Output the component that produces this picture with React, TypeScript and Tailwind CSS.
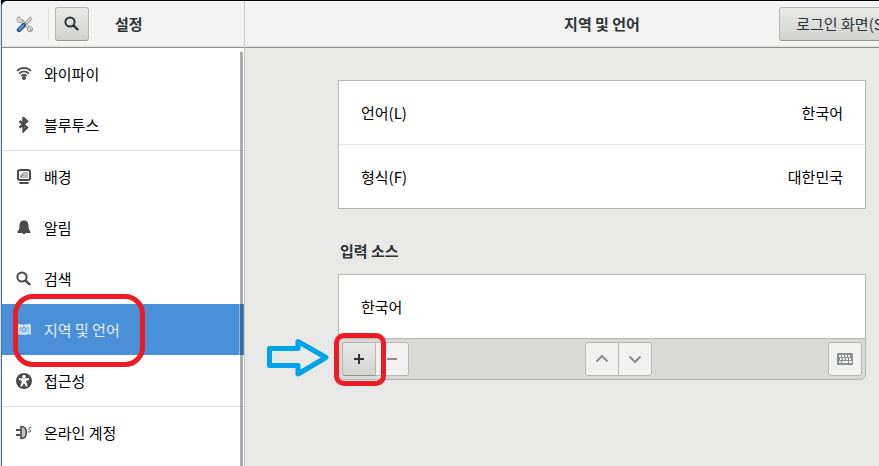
import React, { useState } from 'react';

const SearchIcon = () => (
    <svg width="16" height="16" viewBox="0 0 16 16" fill="none" stroke="currentColor" aria-hidden="true">
        <circle cx="6" cy="6" r="4.6" strokeWidth="2" />
        <path d="M9.400 9.400l4.800 4.600" strokeWidth="2.4" />
    </svg>
);

const ToolsIcon = () => (
    <svg width="18" height="18" viewBox="0 0 18 18" fill="none" aria-hidden="true">
        <path d="M15.400 2.600L9.400 9" stroke="#777a76" strokeWidth="3" />
        <path d="M15.200 2.800L9.400 9" stroke="#f2f2f0" strokeWidth="1.4" />
        <path d="M5 5.500l8.500 8" stroke="#858783" strokeWidth="3.6" />
        <path d="M5 5.500l8.500 8" stroke="#e6e6e3" strokeWidth="1.8" />
        <path d="M3.400 1.600a3 3 0 1 0 3.600 3.200L5.200 5 4 3.600z" fill="#e6e6e2" stroke="#9a9b97" />
        <circle cx="14" cy="14.200" r="2.600" fill="#e6e6e2" stroke="#9a9b97" />
        <circle cx="14.600" cy="14.800" r="0.900" fill="#777a76" />
        <path d="M7.800 10.200L3 15" stroke="#204a87" strokeWidth="4.400" strokeLinecap="round" />
        <path d="M7.600 10.200L3.200 14.600" stroke="#5b92d6" strokeWidth="2.200" strokeLinecap="round" />
    </svg>
);

const WifiIcon = () => (
    <svg width="16" height="16" viewBox="0 0 16 16" fill="none" stroke="currentColor" strokeWidth="1.8" aria-hidden="true">
        <path d="M1 5C5 .8 11 .8 15 5" />
        <path d="M3.200 7.600c2.800-3 6.800-3 9.600 0" />
        <path d="M5.300 10c1.600-1.700 3.800-1.700 5.400 0" />
        <circle cx="8" cy="12" r="2" fill="currentColor" stroke="none" />
    </svg>
);

const BluetoothIcon = () => (
    <svg width="16" height="16" viewBox="0 0 16 16" fill="none" stroke="currentColor" strokeWidth="2.4" aria-hidden="true">
        <path d="M3.500 4l7.500 6.500L7.500 14V1L11 4.200 3.500 10.700" />
    </svg>
);

const BackgroundIcon = () => (
    <svg width="16" height="16" viewBox="0 0 16 16" fill="none" aria-hidden="true">
        <rect x="2" y="1" width="12" height="10" rx="2" stroke="currentColor" strokeWidth="2" />
        <path d="M7 3h5v6H4V8h3z" fill="#bdbdbd" />
        <path d="M4 7.200h2.200V4.500" stroke="currentColor" />
        <path d="M3 13h10l-.6 2H3.600z" fill="currentColor" />
    </svg>
);

const BellIcon = () => (
    <svg width="16" height="16" viewBox="0 0 16 16" fill="currentColor" aria-hidden="true">
        <path d="M8 .5c-3.200 0-4.500 2.200-4.500 5 0 3.400-.6 5-2 5.800v1.700h13v-1.700c-1.400-.8-2-2.400-2-5.800C12.500 2.700 11.200.5 8 .5z" />
        <path d="M6.300 13h3.400L8 14.500z" />
    </svg>
);

const FlagIcon = () => (
    <svg width="16" height="16" viewBox="0 0 16 16" fill="none" aria-hidden="true">
        <path d="M1 2.500c3-1.500 5 .7 8 0 2.200-.6 4-1 6-.1v10.500c-2-1-4-.5-6 0-3 .8-5-1.200-8 0z" fill="#c8dcf2" />
        <circle cx="8" cy="7.500" r="2" stroke="#4a90d9" />
        <path d="M4.600 5.200c-1 1.500-1 3 0 4.500M11.400 5.200c1 1.500 1 3 0 4.500" stroke="#6ea6e0" />
    </svg>
);

const AccessibilityIcon = () => (
    <svg width="16" height="16" viewBox="0 0 16 16" aria-hidden="true">
        <circle cx="8" cy="8" r="8" fill="currentColor" />
        <circle cx="8" cy="3.500" r="1.700" fill="#fff" />
        <path d="M3 5.300h10v1.700l-3 1L11.700 13l-1.600.7L8 10l-2.100 3.700-1.600-.7L6 8 3 7z" fill="#fff" />
    </svg>
);

const AccountsIcon = () => (
    <svg width="16" height="16" viewBox="0 0 16 16" fill="none" stroke="currentColor" aria-hidden="true">
        <path d="M0 5h4.500M0 10h4.500" strokeWidth="2" />
        <path d="M5 1.500c3.800 0 5.300 2.700 5.300 6s-1.500 6-5.300 6z" fill="#c4c4c4" strokeWidth="1.600" />
        <path d="M15.300 2.700c-1.500-.6-2.700 0-2.500 1.100.2 1.100 2.100.8 1.900 2.200-.2 1-1.500 1.300-2.700.7" />
    </svg>
);

const KeyboardIcon = () => (
    <svg width="16" height="16" viewBox="0 0 16 16" aria-hidden="true">
        <rect y="2" width="16" height="12" rx="1" fill="currentColor" />
        <path
            d="M2 4h2v2H2zM5 4h2v2H5zM8 4h2v2H8zM11 4h2v2h-2zM3 7h2v2H3zM6 7h2v2H6zM9 7h2v2H9zM12 7h2v2h-2zM2 10h2v2H2zM5 10h6v2H5zM12 10h3v2h-3z"
            fill="#f1f1f1"
        />
    </svg>
);

const groups = [
    [
        { id: 'wifi', label: '와이파이', icon: <WifiIcon /> },
        { id: 'bluetooth', label: '블루투스', icon: <BluetoothIcon /> },
    ],
    [
        { id: 'background', label: '배경', icon: <BackgroundIcon /> },
        { id: 'notifications', label: '알림', icon: <BellIcon /> },
        { id: 'search', label: '검색', icon: <SearchIcon /> },
        { id: 'region', label: '지역 및 언어', icon: <FlagIcon /> },
        { id: 'accessibility', label: '접근성', icon: <AccessibilityIcon /> },
    ],
    [{ id: 'accounts', label: '온라인 계정', icon: <AccountsIcon /> }],
];

const raised = 'border border-[#b6b6b3] border-b-[#949490] bg-linear-to-b from-[#e9e9e8] to-[#d2d2d0] text-[#2e3436]';
const flat = 'border border-[#b8b8b3] bg-[#f1f1f1] text-[#8b8e8f]';
const headerBar = 'h-[47px] shrink-0 items-center border-t border-b border-t-white border-b-[#8f8f8b] bg-linear-to-b from-[#f3f3f3] from-95% to-[#deded9] pb-[2px]';

const Sidebar: React.FC = () => {
    const [selected, setSelected] = useState('region');

    return (
        <nav className="relative flex-1 bg-white text-black">
            {groups.map((group, i) => (
                <ul key={i} className={i > 0 ? 'border-t border-[#e2e2e2]' : ''}>
                    {group.map(item => (
                        <li key={item.id} className="relative">
                            <button
                                onClick={() => setSelected(item.id)}
                                className={`flex h-[51px] w-full items-center gap-3 pl-[14px] text-left ${selected === item.id ? 'bg-[#4a90d9] text-[#e4eefa]' : ''}`}
                            >
                                <span className={selected === item.id ? '' : 'text-[#4b4b4b]'}>{item.icon}</span>
                                {item.label}
                            </button>
                            {item.id === 'region' && (
                                <div className="pointer-events-none absolute -top-[10px] left-[11px] z-10 h-[73px] w-[132px] rounded-[20px] border-5 border-[#ed1c24]" />
                            )}
                        </li>
                    ))}
                </ul>
            ))}
            <div className="absolute top-[3px] right-px bottom-0 w-1 rounded-t border-l border-white/40 bg-[#2e3436]/40 bg-clip-padding" />
        </nav>
    );
};

const App: React.FC = () => {
    return (
        <div className="flex h-screen overflow-hidden border-l border-[#cfe0f2] bg-black pt-px font-['Noto_Sans_CJK_KR','Noto_Sans_CJK_SC',sans-serif] text-[15px] leading-6 text-[#2e3436]">
            <aside className="flex w-[244px] shrink-0 flex-col overflow-hidden rounded-tl-md border-r border-l border-r-[#c8c8c4] border-l-[#5c7389] bg-[#f3f3f3]">
                <header className={`flex pl-[14px] ${headerBar}`}>
                    <ToolsIcon />
                    <div className="ml-[14px] h-[34px] w-px bg-[#dcdcda]" />
                    <button aria-label="검색" className={`ml-[6px] flex size-[34px] items-center justify-center rounded-[3px] ${raised}`}>
                        <SearchIcon />
                    </button>
                    <h1 className="ml-[26px] font-bold">설정</h1>
                </header>
                <Sidebar />
            </aside>

            {/* the panel runs on past the right edge of the window */}
            <main className="-mr-20 flex flex-1 flex-col bg-[#e8e8e6]">
                <header className={`grid grid-cols-[1fr_auto_1fr] ${headerBar}`}>
                    <h2 className="col-start-2 font-bold">지역 및 언어</h2>
                    <button className={`mr-[54px] h-[34px] w-[126px] justify-self-end rounded-[3px] text-center ${raised}`}>
                        로그인 화면(S)
                    </button>
                </header>

                <div className="px-[93px] pt-8">
                    <div className="divide-y divide-[#e2e2e2] border border-[#b6b6b3] bg-white text-black">
                        <button className="flex h-16 w-full items-center justify-between px-[22px]">
                            <span>언어(L)</span>
                            <span>한국어</span>
                        </button>
                        <button className="flex h-[63px] w-full items-center justify-between px-[22px]">
                            <span>형식(F)</span>
                            <span>대한민국</span>
                        </button>
                    </div>

                    <h3 className="mt-[30px] mb-[11px] pl-[2px] font-bold">입력 소스</h3>

                    <div className="rounded-b-md border border-[#b6b6b3] bg-[#d9d9d7]">
                        <ul className="border-b border-[#b6b6b3] bg-white text-black">
                            <li className="flex h-[63px] items-center px-[22px]">한국어</li>
                        </ul>
                        <div className="flex justify-between p-[3px]">
                            <div className="relative flex">
                                <button aria-label="추가" className={`flex h-[34px] w-[34px] items-center justify-center rounded-l-[3px] ${raised}`}>
                                    <svg width="16" height="16" viewBox="0 0 16 16" stroke="currentColor" strokeWidth="2">
                                        <path d="M8 3v10M3 8h10" />
                                    </svg>
                                </button>
                                <button aria-label="제거" className={`-ml-px flex h-[34px] w-[34px] items-center justify-center rounded-r-[3px] ${flat}`}>
                                    <svg width="16" height="16" viewBox="0 0 16 16" stroke="currentColor" strokeWidth="2">
                                        <path d="M3 8h10" />
                                    </svg>
                                </button>
                                <div className="pointer-events-none absolute -top-[9px] -left-2 h-[53px] w-[52px] rounded-[10px] border-5 border-[#ed1c24]" />
                                <svg
                                    className="pointer-events-none absolute -top-1 -left-[75px]"
                                    width="62"
                                    height="40"
                                    viewBox="0 0 62 40"
                                    fill="none"
                                    stroke="#00a2e8"
                                    strokeWidth="5"
                                    strokeLinejoin="round"
                                >
                                    <path d="M2.500 10.500H31V3.500L59 19.500 31 36V27.500H2.500z" />
                                </svg>
                            </div>
                            <div className="flex">
                                <button aria-label="위로" className={`flex h-[34px] w-[34px] items-center justify-center rounded-l-[3px] ${flat}`}>
                                    <svg width="16" height="16" viewBox="0 0 16 16" fill="none" stroke="currentColor" strokeWidth="2">
                                        <path d="M2.500 10.500L8 5l5.500 5.500" />
                                    </svg>
                                </button>
                                <button aria-label="아래로" className={`-ml-px flex h-[34px] w-[34px] items-center justify-center rounded-r-[3px] ${flat}`}>
                                    <svg width="16" height="16" viewBox="0 0 16 16" fill="none" stroke="currentColor" strokeWidth="2">
                                        <path d="M2.500 5.500L8 11l5.500-5.500" />
                                    </svg>
                                </button>
                            </div>
                            <button aria-label="키보드 배치" className={`flex size-[34px] items-center justify-center rounded-[3px] ${flat}`}>
                                <KeyboardIcon />
                            </button>
                        </div>
                    </div>
                </div>
            </main>
        </div>
    );
};

export default App;
